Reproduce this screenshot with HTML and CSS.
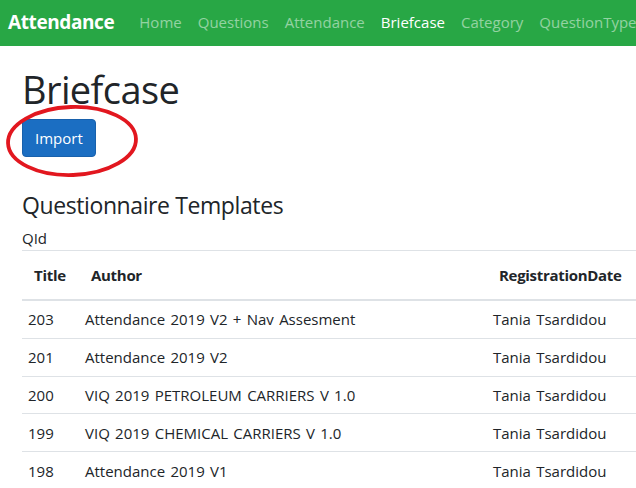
FILE: index.html
```html
<!DOCTYPE html>
<html lang="en">
<head>
<meta charset="utf-8">
<title>Briefcase - Attendance</title>
<link rel="stylesheet" href="styles.css">
</head>
<body>
<div class="page">
  <nav class="navbar">
    <a class="brand" href="#">Attendance</a>
    <ul class="nav">
      <li><a href="#">Home</a></li>
      <li><a href="#">Questions</a></li>
      <li><a href="#">Attendance</a></li>
      <li><a class="active" href="#">Briefcase</a></li>
      <li><a href="#">Category</a></li>
      <li><a href="#">QuestionType</a></li>
    </ul>
  </nav>
  <main class="content">
    <h1 class="title">Briefcase</h1>
    <div class="actions">
      <button class="btn">Import</button>
      <svg class="mark" width="140" height="80" viewBox="0 0 140 80"><ellipse cx="68" cy="37" rx="64" ry="34" fill="none" stroke="#e2171f" stroke-width="3.8" transform="rotate(-2 68 37)"/></svg>
    </div>
    <h3 class="subtitle">Questionnaire Templates</h3>
    <div class="label">QId</div>
    <table class="table">
      <thead>
        <tr><th class="c1">Title</th><th class="c2">Author</th><th class="c3">RegistrationDate</th></tr>
      </thead>
      <tbody>
        <tr><td>203</td><td>Attendance 2019 V2 + Nav Assesment</td><td>Tania Tsardidou</td></tr>
        <tr><td>201</td><td>Attendance 2019 V2</td><td>Tania Tsardidou</td></tr>
        <tr><td>200</td><td>VIQ 2019 PETROLEUM CARRIERS V 1.0</td><td>Tania Tsardidou</td></tr>
        <tr><td>199</td><td>VIQ 2019 CHEMICAL CARRIERS V 1.0</td><td>Tania Tsardidou</td></tr>
        <tr><td>198</td><td>Attendance 2019 V1</td><td>Tania Tsardidou</td></tr>
      </tbody>
    </table>
  </main>
</div>
</body>
</html>
```
FILE: styles.css
```css
html, body {
  margin: 0;
  padding: 0;
  background: #fff;
  overflow: hidden;
}
body {
  font-family: "Open Sans", "Noto Sans", sans-serif;
  color: #212529;
  font-size: 15px;
}
.page {
  width: 636px;
  height: 488px;
  overflow: hidden;
}
.navbar {
  box-sizing: border-box;
  height: 46px;
  background: #28a745;
  display: flex;
  align-items: center;
  padding: 0 0 2px 8px;
  white-space: nowrap;
}
.brand {
  color: #fff;
  font-weight: 700;
  font-size: 19px;
  text-decoration: none;
  margin-right: 17px;
  letter-spacing: -0.4px;
  line-height: 26px;
}
.nav {
  list-style: none;
  display: flex;
  margin: 0;
  padding: 0;
}
.nav a {
  display: block;
  padding: 0 8px;
  color: rgba(255,255,255,0.5);
  text-decoration: none;
  font-size: 15px;
  line-height: 24px;
}
.nav a.active {
  color: #fff;
}
.content {
  padding-left: 22px;
}
.title {
  font-size: 38px;
  font-weight: 400;
  line-height: 48px;
  letter-spacing: -0.6px;
  margin: 19px 0 6px;
}
.actions {
  position: relative;
  height: 38px;
}
.btn {
  font-family: inherit;
  font-size: 15px;
  line-height: 24px;
  padding: 6px 12px;
  color: #fff;
  background: #1b6ec2;
  border: 1px solid #1861ac;
  border-radius: 4px;
}
.mark {
  position: absolute;
  left: -18px;
  top: -15px;
}
.subtitle {
  font-size: 23px;
  font-weight: 400;
  line-height: 29px;
  letter-spacing: -0.4px;
  margin: 34px 0 6px;
}
.label {
  font-size: 15px;
  line-height: 24px;
}
.table {
  border-collapse: collapse;
  width: 640px;
  font-size: 15px;
}
.table th {
  text-align: left;
  font-weight: 700;
  padding: 12px;
  line-height: 24px;
  letter-spacing: -0.3px;
  border-top: 1px solid #dee2e6;
  border-bottom: 2px solid #dee2e6;
}
.table td {
  padding: 6.4px 6px;
  line-height: 24px;
  word-spacing: 1.4px;
  border-top: 1px solid #dee2e6;
}
.c1 { width: 33px; }
.c2 { width: 384px; }
```
